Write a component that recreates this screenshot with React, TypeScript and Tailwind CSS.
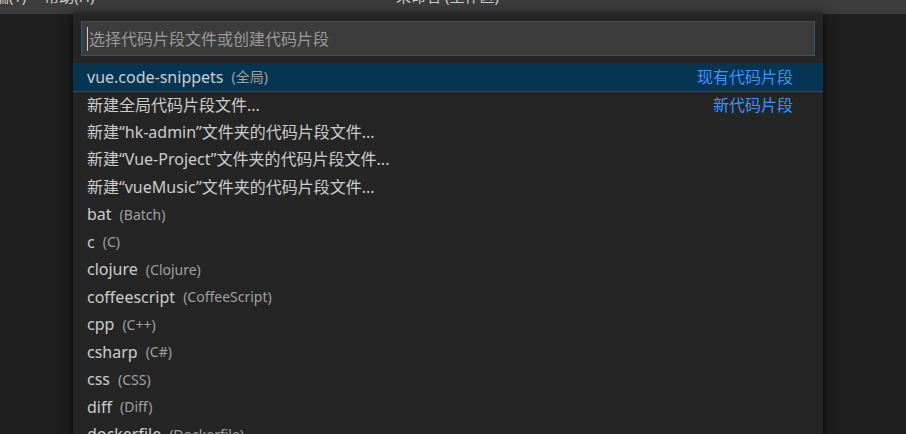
import React from 'react';

interface Pick {
    label: string;
    description?: string;
    detail?: string;
    selected?: boolean;
    separator?: boolean;
}

const picks: Pick[] = [
    { label: 'vue.code-snippets', description: '(全局)', detail: '现有代码片段', selected: true },
    { label: '新建全局代码片段文件...', detail: '新代码片段', separator: true },
    { label: '新建“hk-admin”文件夹的代码片段文件...' },
    { label: '新建“Vue-Project”文件夹的代码片段文件...' },
    { label: '新建“vueMusic”文件夹的代码片段文件...' },
    { label: 'bat', description: '(Batch)' },
    { label: 'c', description: '(C)' },
    { label: 'clojure', description: '(Clojure)' },
    { label: 'coffeescript', description: '(CoffeeScript)' },
    { label: 'cpp', description: '(C++)' },
    { label: 'csharp', description: '(C#)' },
    { label: 'css', description: '(CSS)' },
    { label: 'diff', description: '(Diff)' },
    { label: 'dockerfile', description: '(Dockerfile)' },
];

const font = { fontFamily: '"Noto Sans", "Noto Sans CJK SC", sans-serif' };

// title bar is cut off by the screenshot, only the bottoms of the glyphs show
const TitleBar: React.FC = () => (
    <div className="h-[14px] bg-[#3c3c3c] overflow-hidden relative text-[#cccccc] text-[15px]">
        <div className="flex mt-[-14px] h-[20px] leading-[20px] ml-[-29px]">
            <span className="px-[8px]">终端(T)</span>
            <span className="px-[8px] ml-[2px]">帮助(H)</span>
        </div>
        <div className="absolute left-[396px] top-[-14px] h-[20px] leading-[20px]">未命名 (工作区)</div>
    </div>
);

const Row: React.FC<{ pick: Pick }> = ({ pick }) => (
    <div
        className={`h-[27.5px] flex items-center pl-[14px] pr-[30px] ${
            pick.selected ? 'bg-[#063554]' : ''
        } ${pick.separator ? 'border-t border-[#434343]' : ''}`}
    >
        <span className="text-[16px] text-[#cccccc] whitespace-nowrap">{pick.label}</span>
        {pick.description && (
            <span className="ml-[8px] text-[14px] text-[#a0a0a0] whitespace-nowrap">{pick.description}</span>
        )}
        <div className="flex-1" />
        {pick.detail && <span className="text-[16px] text-[#3794ff] whitespace-nowrap">{pick.detail}</span>}
    </div>
);

const App: React.FC = () => {
    return (
        <div className="w-[906px] h-[434px] overflow-hidden bg-[#1e1e1e] flex flex-col" style={font}>
            <TitleBar />
            <div className="flex-1 relative">
                <div className="absolute left-[73px] top-0 w-[750px] h-[440px] bg-[#252526] shadow-[0_0_9px_rgba(0,0,0,0.75)]">
                    <div className="mx-[8px] mt-[7px] h-[35px] bg-[#3c3c3c] border border-[#1d5b86] flex items-center pl-[5px]">
                        <span className="w-px h-[24px] bg-[#cccccc]" />
                        <span className="text-[16px] text-[#9a9a9a] ml-[1px]">选择代码片段文件或创建代码片段</span>
                    </div>
                    <div className="mt-[7px]">
                        {picks.map((p) => (
                            <Row key={p.label} pick={p} />
                        ))}
                    </div>
                </div>
            </div>
        </div>
    );
};

export default App;
